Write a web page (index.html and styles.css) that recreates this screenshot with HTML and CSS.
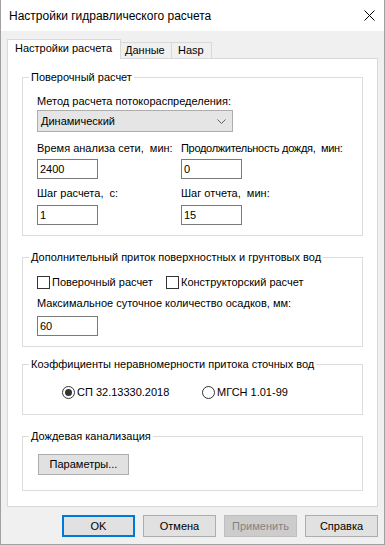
FILE: index.html
```html
<!DOCTYPE html>
<html lang="ru">
<head>
<meta charset="utf-8">
<title>Настройки гидравлического расчета</title>
<link rel="stylesheet" href="styles.css">
</head>
<body>
<div class="window">
  <div class="titlebar">
    <span class="title">Настройки гидравлического расчета</span>
    <svg class="close" width="11" height="11" viewBox="0 0 11 11"><path d="M0.5 0.5 L10.5 10.5 M10.5 0.5 L0.5 10.5" stroke="#000" stroke-width="1" fill="none"/></svg>
  </div>
  <div class="client">
    <div class="tabs">
      <div class="tab active">Настройки расчета</div>
      <div class="tab t2">Данные</div>
      <div class="tab t3">Hasp</div>
    </div>
    <div class="panel">
      <fieldset class="group g1">
        <legend>Поверочный расчет</legend>
        <div class="gbody">
          <div class="lbl">Метод расчета потокораспределения:</div>
          <div class="combo"><span>Динамический</span>
            <svg class="chev" width="9" height="5" viewBox="0 0 9 5"><path d="M0.5 0.5 L4.5 4.5 L8.5 0.5" stroke="#606060" stroke-width="1" fill="none"/></svg>
          </div>
          <div class="grid2">
            <div class="lbl">Время анализа сети,&nbsp; мин:</div>
            <div class="lbl tight">Продолжительность дождя,&nbsp; мин:</div>
            <div class="inp r1">2400</div>
            <div class="inp r1">0</div>
            <div class="lbl r2">Шаг расчета,&nbsp; с:</div>
            <div class="lbl r2">Шаг отчета,&nbsp; мин:</div>
            <div class="inp r3">1</div>
            <div class="inp r3">15</div>
          </div>
        </div>
      </fieldset>
      <fieldset class="group g2">
        <legend>Дополнительный приток поверхностных и грунтовых вод</legend>
        <div class="gbody">
          <div class="checks">
            <div class="check"><span class="cbox"></span><span>Поверочный расчет</span></div>
            <div class="check"><span class="cbox"></span><span>Конструкторский расчет</span></div>
          </div>
          <div class="lbl m8">Максимальное суточное количество осадков, мм:</div>
          <div class="inp m6">60</div>
        </div>
      </fieldset>
      <fieldset class="group g3">
        <legend>Коэффициенты неравномерности притока сточных вод</legend>
        <div class="gbody">
          <div class="radios">
            <div class="radio"><span class="rcirc on"></span><span>СП 32.13330.2018</span></div>
            <div class="radio"><span class="rcirc"></span><span>МГСН 1.01-99</span></div>
          </div>
        </div>
      </fieldset>
      <fieldset class="group g4">
        <legend>Дождевая канализация</legend>
        <div class="gbody">
          <div class="btn params">Параметры...</div>
        </div>
      </fieldset>
    </div>
    <div class="buttons">
      <div class="btn dlg default">OK</div>
      <div class="btn dlg">Отмена</div>
      <div class="btn dlg disabled">Применить</div>
      <div class="btn dlg">Справка</div>
    </div>
  </div>
</div>
</body>
</html>
```
FILE: styles.css
```css
* { box-sizing: border-box; }
html, body { margin: 0; padding: 0; }
body {
  width: 385px;
  height: 545px;
  overflow: hidden;
  font-family: "Liberation Sans", Arial, sans-serif;
  font-size: 11px;
  line-height: 13px;
  color: #000;
  background: #fff;
}
.window {
  width: 385px;
  height: 545px;
  border: 1px solid #a0a0a0;
  border-top: 0;
  display: flex;
  flex-direction: column;
}
.titlebar {
  height: 31px;
  flex: none;
  background: #fff;
  display: flex;
  align-items: center;
  justify-content: space-between;
  padding: 0 9px 0 8px;
}
.title {
  font-size: 12px;
  line-height: 16px;
  padding-top: 1px;
}
.close { display: block; margin-top: 0; }
.client {
  flex: 1;
  background: #f0f0f0;
  padding: 8px 6px 0 6px;
}
.tabs {
  display: flex;
  align-items: flex-end;
  height: 19px;
}
.tab {
  height: 16px;
  border: 1px solid #d9d9d9;
  border-bottom: 0;
  border-left: 0;
  background: #f0f0f0;
  padding: 1px 0 0 4px;
  line-height: 13px;
}
.tab.active {
  width: 114px;
  height: 20px;
  margin-bottom: -1px;
  border-left: 1px solid #d9d9d9;
  background: #fff;
  padding: 2px 0 0 7px;
  position: relative;
  z-index: 1;
}
.tab.t2 { width: 51px; }
.tab.t3 { width: 40px; padding-left: 6px; }
.panel {
  width: 371px;
  background: #fff;
  border: 1px solid #d9d9d9;
  padding: 12px 14px 15px 14px;
}
.group {
  margin: 0;
  padding: 0;
  min-width: 0;
  border: 1px solid #dcdcdc;
}
.group legend {
  padding: 0 2px;
  margin-left: 6px;
  line-height: 13px;
}
.gbody { padding: 0 14px; }
.g1 .gbody { padding-top: 11px; padding-bottom: 10px; }
.g2 { margin-top: 15px; }
.g2 .gbody { padding-top: 12px; padding-bottom: 10px; }
.g3 { margin-top: 11px; }
.g3 .gbody { padding-top: 15px; padding-bottom: 15px; }
.g4 { margin-top: 15px; }
.g4 .gbody { padding-top: 11px; padding-bottom: 15px; }

.lbl { line-height: 13px; white-space: nowrap; }
.lbl.tight { letter-spacing: -0.3px; }
.combo {
  margin-top: 2px;
  width: 196px;
  height: 22px;
  background: #e5e5e5;
  border: 1px solid #adadad;
  display: flex;
  align-items: center;
  justify-content: space-between;
  padding: 0 6px 0 3px;
}
.chev { display: block; }
.grid2 {
  margin-top: 10px;
  display: grid;
  grid-template-columns: 144px 1fr;
}
.inp {
  width: 61px;
  height: 20px;
  border: 1px solid #7a7a7a;
  background: #fff;
  padding: 0 0 0 2px;
  line-height: 18px;
}
.r1 { margin-top: 4px; }
.r2 { margin-top: 8px; }
.r3 { margin-top: 5px; }
.m8 { margin-top: 8px; }
.m6 { margin-top: 6px; }
.checks {
  display: grid;
  grid-template-columns: 129px auto;
  height: 13px;
}
.check, .radio {
  display: flex;
  align-items: center;
  height: 13px;
  white-space: nowrap;
}
.cbox {
  width: 13px;
  height: 13px;
  border: 1px solid #333;
  background: #fff;
  margin-right: 2px;
  flex: none;
}
.radios {
  display: grid;
  grid-template-columns: 140px auto;
  padding-left: 25px;
  height: 13px;
}
.rcirc {
  width: 13px;
  height: 13px;
  border: 1px solid #333;
  border-radius: 50%;
  background: #fff;
  margin-right: 2px;
  flex: none;
  display: flex;
  align-items: center;
  justify-content: center;
}
.rcirc.on::after {
  content: "";
  width: 7px;
  height: 7px;
  border-radius: 50%;
  background: #333;
}
.btn {
  background: #e1e1e1;
  border: 1px solid #adadad;
  display: flex;
  align-items: center;
  justify-content: center;
  white-space: nowrap;
}
.params {
  width: 91px;
  height: 21px;
  margin-left: 1px;
}
.buttons {
  margin-top: 8px;
  display: flex;
  justify-content: flex-end;
  gap: 8px;
  padding-right: 0;
}
.dlg {
  width: 73px;
  height: 22px;
}
.dlg.default { border: 2px solid #0078d7; }
.dlg.disabled {
  background: #cccccc;
  border-color: #bfbfbf;
  color: #838383;
}
```
